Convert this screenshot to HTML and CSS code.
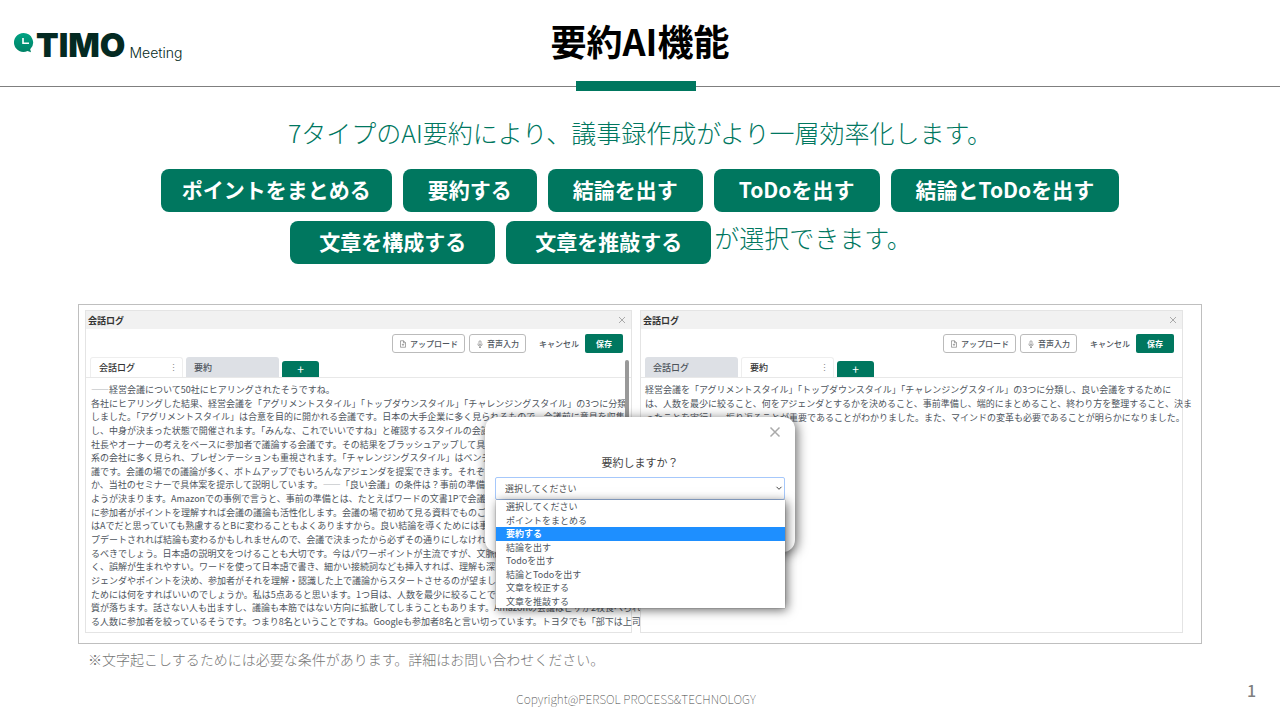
FILE: index.html
```html
<!DOCTYPE html>
<html lang="ja">
<head>
<meta charset="utf-8">
<meta name="viewport" content="width=device-width, initial-scale=1">
<title>要約AI機能</title>
<link rel="stylesheet" href="styles.css">
</head>
<body>
<svg class="defs" aria-hidden="true">
  <symbol id="i-file" viewBox="0 0 16 16"><path d="M9 1.500H3v13h10v-9zM9 1.500v4h4M8 12V8M6 9.700 8 7.700l2 2" /></symbol>
  <symbol id="i-mic" viewBox="0 0 16 16"><path d="M6 3.500a2 2 0 0 1 4 0v4a2 2 0 0 1-4 0zM3.500 7.500a4.500 4.500 0 0 0 9 0M8 12v3M6 15h4" /></symbol>
  <symbol id="i-x" viewBox="0 0 16 16"><path d="M2 2 14 14M14 2 2 14" /></symbol>
</svg>
<header class="header">
  <div class="logo">
    <svg class="logo-mark" viewBox="0 0 20 20" aria-hidden="true">
      <defs><linearGradient id="g" x1="0" y1="0" x2="0" y2="1"><stop offset="0" stop-color="#00a283"/><stop offset="1" stop-color="#008266"/></linearGradient></defs>
      <path fill="url(#g)" d="M9.500 0a9.500 9.500 0 1 0 4 18.100l3.500 1.100-.8-2.900A9.500 9.500 0 0 0 9.500 0z"/>
      <path d="M9 5v5.200h6" fill="none" stroke="#fff" stroke-width="1.600"/>
    </svg>
    <span class="logo-name">TIMO</span>
    <span class="logo-sub">Meeting</span>
  </div>
  <h1 class="title">要約AI機能</h1>
  <span class="accent"></span>
</header>
<main class="main">
  <p class="lead">7タイプのAI要約により、議事録作成がより一層効率化します。</p>
  <ul class="types">
    <li class="pill pill-s">ポイントをまとめる</li>
    <li class="pill">要約する</li>
    <li class="pill">結論を出す</li>
    <li class="pill">ToDoを出す</li>
    <li class="pill">結論とToDoを出す</li>
  </ul>
  <div class="types types-second">
    <span class="pill pill-l">文章を構成する</span>
    <span class="pill pill-l">文章を推敲する</span>
    <span class="lead lead-end">が選択できます。</span>
  </div>

  <section class="frame">
    <article class="panel">
      <div class="panel-head"><h2>会話ログ</h2><button class="close" aria-label="閉じる"><svg><use href="#i-x"/></svg></button></div>
      <div class="toolbar">
        <button class="btn"><svg><use href="#i-file"/></svg>アップロード</button>
        <button class="btn"><svg><use href="#i-mic"/></svg>音声入力</button>
        <button class="cancel">キャンセル</button>
        <button class="save">保存</button>
      </div>
      <div class="tabs">
        <button class="tab active">会話ログ<span class="dots">⋮</span></button>
        <button class="tab">要約</button>
        <button class="add" aria-label="追加">+</button>
      </div>
      <div class="log">
        <span>――経営会議について50社にヒアリングされたそうですね。</span>
        <span>各社にヒアリングした結果、経営会議を「アグリメントスタイル」「トップダウンスタイル」「チャレンジングスタイル」の3つに分類</span>
        <span>しました。「アグリメントスタイル」は合意を目的に開かれる会議です。日本の大手企業に多く見られるもので、会議前に意見を収集</span>
        <span>し、中身が決まった状態で開催されます。「みんな、これでいいですね」と確認するスタイルの会議です。</span>
        <span>社長やオーナーの考えをベースに参加者で議論する会議です。その結果をブラッシュアップして具体的に</span>
        <span>系の会社に多く見られ、プレゼンテーションも重視されます。「チャレンジングスタイル」はベンチャー</span>
        <span>議です。会議の場での議論が多く、ボトムアップでもいろんなアジェンダを提案できます。それぞれの</span>
        <span>か、当社のセミナーで具体案を提示して説明しています。――「良い会議」の条件は？事前の準備が7割</span>
        <span>ようが決まります。Amazonでの事例で言うと、事前の準備とは、たとえばワードの文書1Pで会議内容</span>
        <span>に参加者がポイントを理解すれば会議の議論も活性化します。会議の場で初めて見る資料でものごとを</span>
        <span>はAでだと思っていても熟慮するとBに変わることもよくありますから。良い結論を導くためには事前に</span>
        <span>プデートされれば結論も変わるかもしれませんので、会議で決まったから必ずその通りにしなければ</span>
        <span>るべきでしょう。日本語の説明文をつけることも大切です。今はパワーポイントが主流ですが、文脈的な</span>
        <span>く、誤解が生まれやすい。ワードを使って日本語で書き、細かい接続詞なども挿入すれば、理解も深まり</span>
        <span>ジェンダやポイントを決め、参加者がそれを理解・認識した上で議論からスタートさせるのが望ましいと</span>
        <span>ためには何をすればいいのでしょうか。私は5点あると思います。1つ目は、人数を最少に絞ることです。</span>
        <span>質が落ちます。話さない人も出ますし、議論も本筋ではない方向に拡散してしまうこともあります。Amazonの会議はピザが2枚食べられ</span>
        <span>る人数に参加者を絞っているそうです。つまり8名ということですね。Googleも参加者8名と言い切っています。トヨタでも「部下は上司</span>
      </div>
      <span class="thumb"></span>
    </article>

    <article class="panel">
      <div class="panel-head"><h2>会話ログ</h2><button class="close" aria-label="閉じる"><svg><use href="#i-x"/></svg></button></div>
      <div class="toolbar">
        <button class="btn"><svg><use href="#i-file"/></svg>アップロード</button>
        <button class="btn"><svg><use href="#i-mic"/></svg>音声入力</button>
        <button class="cancel">キャンセル</button>
        <button class="save">保存</button>
      </div>
      <div class="tabs">
        <button class="tab">会話ログ</button>
        <button class="tab active">要約<span class="dots">⋮</span></button>
        <button class="add" aria-label="追加">+</button>
      </div>
      <div class="log log-short">
        <span>経営会議を「アグリメントスタイル」「トップダウンスタイル」「チャレンジングスタイル」の3つに分類し、良い会議をするために</span>
        <span>は、人数を最少に絞ること、何をアジェンダとするかを決めること、事前準備し、端的にまとめること、終わり方を整理すること、決ま</span>
        <span>ったことを実行し、振り返ることが重要であることがわかりました。また、マインドの変革も必要であることが明らかになりました。</span>
      </div>
    </article>

    <div class="modal" role="dialog" aria-labelledby="q">
      <button class="modal-close" aria-label="閉じる"><svg><use href="#i-x"/></svg></button>
      <label class="question" id="q" for="kind">要約しますか？</label>
      <div class="picker">
        <select id="kind"><option>選択してください</option></select>
        <svg class="chevron" viewBox="0 0 8 8" aria-hidden="true"><path d="M1.500 2.800 4 5.300 6.500 2.800"/></svg>
        <ul class="options" role="listbox" aria-label="要約の種類">
          <li role="option">選択してください</li>
          <li role="option">ポイントをまとめる</li>
          <li role="option" aria-selected="true" class="selected">要約する</li>
          <li role="option">結論を出す</li>
          <li role="option">Todoを出す</li>
          <li role="option">結論とTodoを出す</li>
          <li role="option">文章を校正する</li>
          <li role="option">文章を推敲する</li>
        </ul>
      </div>
    </div>
  </section>
  <p class="note">※文字起こしするためには必要な条件があります。詳細はお問い合わせください。</p>
</main>
<footer class="footer">
  <small class="copy">Copyright@PERSOL PROCESS&amp;TECHNOLOGY</small>
  <span class="page">1</span>
</footer>
</body>
</html>
```
FILE: styles.css
```css
* { box-sizing: border-box; }

body {
  margin: 0;
  min-height: 100vh;
  display: flex;
  flex-direction: column;
  background: #fff;
  font-family: "Noto Sans CJK JP", sans-serif;
  color: #4d545c;
}

h1, h2, p, ul { margin: 0; padding: 0; }
ul { list-style: none; }
button { font: inherit; color: inherit; background: none; border: 0; padding: 0; margin: 0; }
.defs { position: absolute; width: 0; height: 0; }

/* Header */
.header {
  position: relative;
  display: grid;
  grid-template-columns: 1fr auto 1fr;
  align-items: center;
  height: 87px;
  border-bottom: 1px solid #7f7f7f;
}
.logo {
  display: flex;
  align-items: center;
  padding: 3px 0 0 14px;
  color: #042a22;
}
.logo-mark { width: 20px; height: 20px; margin: 0 2px 4px 0; }
.logo-name {
  font: 900 33px/32px Inter, sans-serif;
}
.logo-sub {
  align-self: flex-end;
  margin-left: 4px;
  font: 300 14px/16px Inter, sans-serif;
}
.title {
  padding-bottom: 6px;
  color: #000;
  font-size: 36px;
  line-height: 44px;
  font-weight: 700;
}
.accent {
  position: absolute;
  left: calc(50% - 64px);
  bottom: -5px;
  width: 120px;
  height: 10px;
  background: #00775f;
}

/* Lead text and summary types */
.main {
  display: flex;
  flex-direction: column;
  padding: 27px 78px 0;
}
.lead {
  color: #00775f;
  font-size: 25px;
  line-height: 36px;
  font-weight: 300;
  text-align: center;
  white-space: nowrap;
}
.types {
  display: flex;
  justify-content: center;
  gap: 11px;
  margin-top: 19px;
}
.types-second {
  margin-top: 9px;
  padding-right: 78px;
}
.pill {
  padding: 0 25px 2px;
  border-radius: 8px;
  background: #00775f;
  color: #fff;
  font-size: 21px;
  line-height: 41px;
  font-weight: 700;
  white-space: nowrap;
}
.pill-s { padding: 0 21px 2px; }
.pill-l { padding: 0 29px 2px; }
.lead-end { margin-left: -8px; line-height: 32px; }

/* Product view */
.frame {
  position: relative;
  display: grid;
  grid-template-columns: 547fr 543fr;
  gap: 8px;
  margin-top: 40px;
  padding: 5px 18px 10px 6px;
  border: 1px solid #bfbfbf;
}
.panel {
  position: relative;
  min-width: 0;
  min-height: 323px;
  display: flex;
  flex-direction: column;
  border: 1px solid #e4e4e4;
  font-size: 9px;
  line-height: 13px;
}
.panel-head {
  display: flex;
  align-items: center;
  justify-content: space-between;
  height: 18px;
  padding: 0 5px 0 2px;
  background: #f1f1f1;
  color: #333;
}
.panel-head h2 { font-size: 9px; line-height: 13px; }
.close svg { display: block; width: 8px; height: 8px; stroke: #aaa; stroke-width: 2; }
.toolbar {
  display: flex;
  align-items: center;
  justify-content: flex-end;
  gap: 4px;
  padding: 5px 8px 4px 0;
}
.btn {
  display: flex;
  align-items: center;
  gap: 3px;
  height: 19px;
  padding: 0 6px;
  border: 1px solid #bbb;
  border-radius: 3px;
  font-size: 8px;
  font-weight: 500;
}
.btn svg { width: 8px; height: 8px; fill: none; stroke: #555; stroke-width: 1; }
.cancel { margin: 0 2px 0 9px; font-size: 8px; font-weight: 500; }
.save {
  width: 38px;
  height: 19px;
  border-radius: 2px;
  background: #00775f;
  color: #fff;
  font-size: 8px;
  font-weight: 700;
}
.tabs {
  display: flex;
  align-items: flex-end;
  gap: 3px;
  padding-left: 4px;
  border-bottom: 1px solid #e8e8e8;
}
.tab {
  display: flex;
  align-items: center;
  justify-content: space-between;
  width: 93px;
  height: 20px;
  padding: 0 4px 0 8px;
  border-radius: 3px 3px 0 0;
  background: #dde0e5;
  font-weight: 500;
}
.tab.active {
  border: 1px solid #eee;
  border-bottom: 0;
  background: #fff;
  color: #333;
}
.dots { color: #888; }
.add {
  width: 37px;
  height: 16px;
  border-radius: 3px 3px 0 0;
  background: #00775f;
  color: #fff;
  font-size: 12px;
  line-height: 16px;
}
.log {
  flex: 1;
  display: grid;
  align-content: space-between;
  margin: 5px 0 4px 5px;
  white-space: nowrap;
}
.log-short { align-content: start; row-gap: 1px; margin-left: 4px; }
.thumb {
  position: absolute;
  top: 49px;
  right: 2px;
  width: 4px;
  height: 190px;
  border-radius: 2px;
  background: #999;
}

/* Dialog laid over both panels */
.modal {
  position: absolute;
  top: 112px;
  left: calc(50% - 155px);
  width: 310px;
  height: 135px;
  padding: 37px 10px 0;
  border-radius: 12px;
  background: #fff;
  box-shadow: 2px 2px 12px rgba(0, 0, 0, 0.6);
  text-align: center;
}
.modal-close { position: absolute; top: 9px; right: 14px; }
.modal-close svg { display: block; width: 12px; height: 12px; stroke: #aaa; stroke-width: 2; }
.question {
  display: block;
  font-size: 11px;
  line-height: 16px;
  color: #444;
}
.picker { position: relative; margin-top: 7px; text-align: left; }
.picker select {
  display: block;
  width: 100%;
  height: 23px;
  padding: 0 9px;
  border: 1px solid #a6c8fb;
  border-radius: 2px;
  background: #fff;
  appearance: none;
  font: inherit;
  font-size: 9px;
  color: #555;
}
.chevron {
  position: absolute;
  top: 7px;
  right: 2px;
  width: 8px;
  height: 8px;
  fill: none;
  stroke: #444;
  stroke-width: 1;
}
.options {
  position: absolute;
  top: 23px;
  left: 1px;
  right: 0;
  height: 108px;
  display: grid;
  grid-auto-rows: 1fr;
  background: #fff;
  box-shadow: 2px 2px 10px rgba(0, 0, 0, 0.6), 0 0 1px #777;
  font-size: 9px;
  line-height: 13px;
}
.options li { padding-left: 10px; }
.options .selected { background: #1e8fff; color: #fff; font-weight: 700; }

/* Notes */
.note {
  margin: 4px 10px 0;
  color: #777;
  font-size: 14px;
  line-height: 22px;
  font-weight: 300;
}
.footer {
  display: grid;
  grid-template-columns: 1fr auto 1fr;
  align-items: end;
  margin-top: auto;
  padding: 0 24px 13px 16px;
}
.copy {
  grid-column: 2;
  color: #444;
  font-size: 12px;
  line-height: 16px;
  font-weight: 100;
}
.page {
  justify-self: end;
  margin-bottom: 7px;
  color: #7f7f7f;
  font-size: 16px;
  line-height: 20px;
  font-weight: 500;
}
```
